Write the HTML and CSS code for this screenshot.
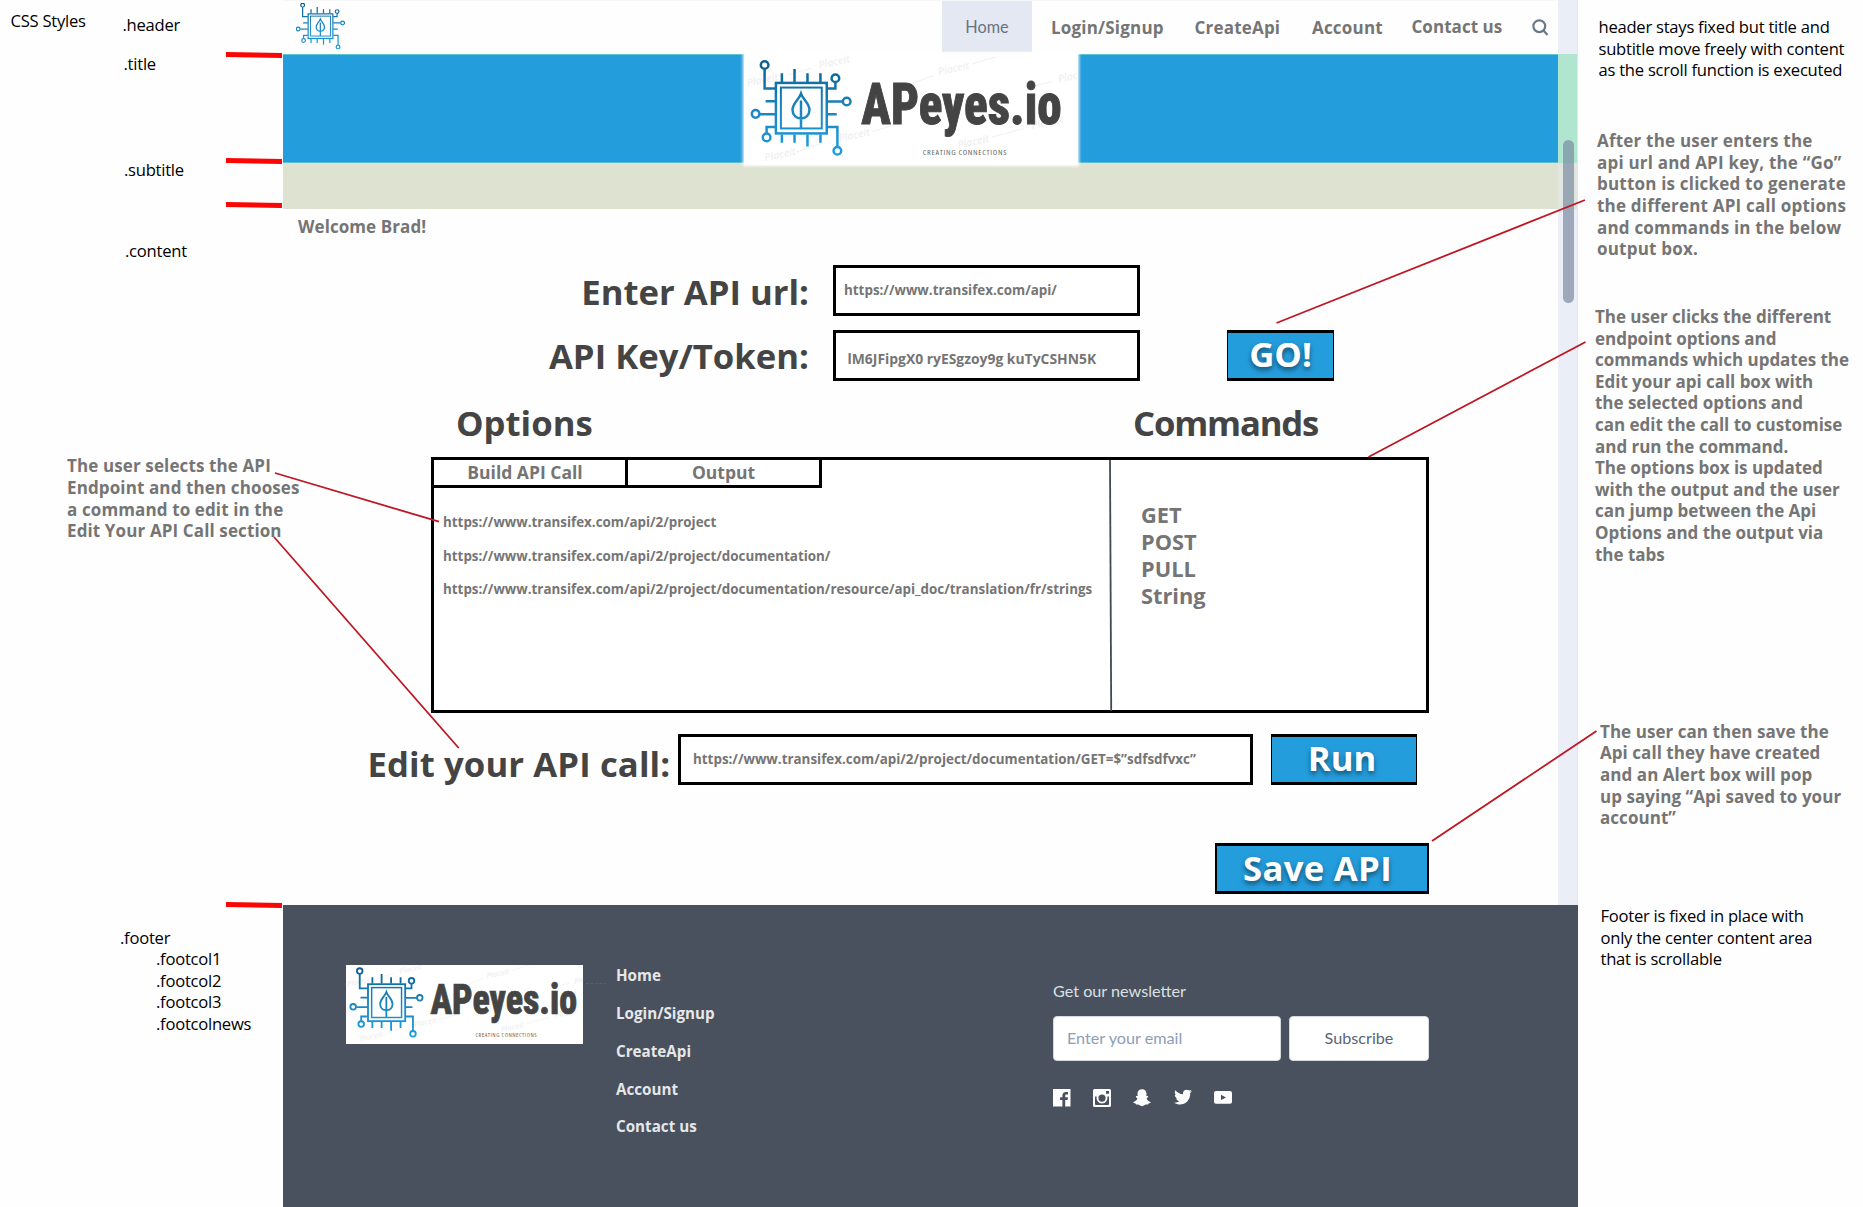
FILE: index.html
```html
<!DOCTYPE html>
<html lang="en">
<head>
<meta charset="utf-8">
<title>APeyes.io wireframe</title>
<link rel="stylesheet" href="styles.css">
</head>
<body>
<svg class="defs" width="0" height="0" aria-hidden="true">
  <defs>
    <linearGradient id="chipfill" gradientUnits="userSpaceOnUse" x1="0" y1="180" x2="0" y2="465">
      <stop offset="0" stop-color="#0b5f8f"/><stop offset=".5" stop-color="#1b84be"/><stop offset="1" stop-color="#1a9fe2"/>
    </linearGradient>
    <symbol id="chip" overflow="visible">
      <g fill="none" stroke="url(#chipfill)" stroke-width="7.5">
        <rect x="167" y="247" width="153" height="152"/>
        <rect x="182" y="261" width="123" height="123" stroke-width="6"/>
        <path d="M185 218V244M223 205V244M262 218V244M301 218V244M185 402V427M223 402V427M262 402V438M301 402V427"/>
        <path d="M133 206V264H165M136 302H165M119 341H165M139 398V380H165M346 246V264H322M322 303H367M322 341H350M322 380H352V438"/>
        <circle cx="133" cy="193" r="11.5"/><circle cx="106" cy="340" r="11.5"/><circle cx="139" cy="411" r="11.5"/>
        <circle cx="346" cy="233" r="11.5"/><circle cx="380" cy="303" r="11.5"/><circle cx="352" cy="451" r="11.5"/>
        <path d="M242.500 279C249 298 268 309 268 328C268 344 257 354 242.500 354C228 354 217 344 217 328C217 309 236 298 242.500 279ZM242.500 300V384"/>
      </g>
    </symbol>
    <symbol id="logo" overflow="visible">
      <g class="watermark">
        <text transform="translate(82 258) rotate(-12)">Placeit</text><text transform="translate(298 204) rotate(-12)">Placeit</text>
        <text transform="translate(657 224) rotate(-12)">Placeit</text><text transform="translate(1018 246) rotate(-12)">Plac</text>
        <text transform="translate(358 424) rotate(-12)">Placeit</text><text transform="translate(716 444) rotate(-12)">Placeit</text>
        <text transform="translate(135 482) rotate(-12)">Placeit</text><text transform="translate(938 386) rotate(-12)">Placeit</text>
        <path d="M202 224L274 202M758 190L830 168M925 261L997 243M456 394L530 372M817 410L915 384M228 455L300 430M540 262L640 225"/>
      </g>
      <use href="#chip"/>
      <text class="wordmark" x="424" y="370" textLength="603" lengthAdjust="spacingAndGlyphs">APeyes.io</text>
      <text class="tagline" x="609" y="464" textLength="254" lengthAdjust="spacingAndGlyphs">CREATING CONNECTIONS</text>
    </symbol>
  </defs>
</svg>

<div class="board">
  <aside class="labels">
    <div class="first"><span class="heading">CSS Styles</span><span class="l-header">.header</span></div>
    <div class="l-title">.title</div>
    <div class="l-subtitle">.subtitle</div>
    <div class="l-content">.content</div>
    <p class="note n-left">The user selects the API<br>Endpoint and then chooses<br>a command to edit in the<br>Edit Your API Call section</p>
    <div class="l-footer">.footer</div>
    <div class="l-cols">.footcol1<br>.footcol2<br>.footcol3<br>.footcolnews</div>
  </aside>

  <div class="app">
    <div class="view">
      <div class="page">
        <header class="header">
          <svg class="mark" viewBox="92 180 301 285"><use href="#chip"/></svg>
          <nav class="nav">
            <a class="active">Home</a><a>Login/Signup</a><a>CreateApi</a><a>Account</a><a class="up">Contact us</a>
            <svg class="search" viewBox="0 0 17 17"><circle cx="7.300" cy="7.200" r="5.900"/><path d="M11.300 11.300L15.500 16"/></svg>
          </nav>
        </header>
        <div class="title"><svg class="banner" viewBox="72 160 1003 334"><use href="#logo"/></svg></div>
        <div class="subtitle"></div>
        <main class="content">
          <div class="welcome">Welcome Brad!</div>
          <div class="form">
            <label class="big drop">Enter API url:</label><div class="field">https://www.transifex.com/api/</div><span></span>
            <label class="big">API Key/Token:</label><div class="field token">lM6JFipgX0 ryESgzoy9g kuTyCSHN5K</div><button class="btn go">GO!</button>
          </div>
          <div class="heads"><h2 class="big">Options</h2><h2 class="big commands-title">Commands</h2></div>
          <section class="panel">
            <div class="options">
              <div class="tabs"><span class="build">Build API Call</span><span>Output</span></div>
              <ul class="urls">
                <li>https://www.transifex.com/api/2/project</li>
                <li>https://www.transifex.com/api/2/project/documentation/</li>
                <li>https://www.transifex.com/api/2/project/documentation/resource/api_doc/translation/fr/strings</li>
              </ul>
            </div>
            <ul class="commands"><li>GET</li><li>POST</li><li>PULL</li><li>String</li></ul>
          </section>
          <div class="edit">
            <label class="big edit-label">Edit your API call:</label>
            <div class="field call">https://www.transifex.com/api/2/project/documentation/GET=$”sdfsdfvxc”</div>
            <button class="btn run">Run</button>
          </div>
          <button class="btn save">Save API</button>
        </main>
      </div>
      <div class="scroll"><div class="thumb"></div></div>
    </div>

    <footer class="footer">
      <svg class="footlogo" viewBox="77 168 974 325"><use href="#logo"/></svg>
      <nav class="footlinks"><a>Home</a><a>Login/Signup</a><a>CreateApi</a><a>Account</a><a>Contact us</a></nav>
      <div class="news">
        <div class="news-title">Get our newsletter</div>
        <div class="news-form"><div class="email">Enter your email</div><div class="subscribe">Subscribe</div></div>
        <div class="social">
          <svg width="18" height="18" viewBox="0 0 18 18"><path fill-rule="evenodd" d="M0 0H17.500V17.500H12.200V11H14.600L15 8.300H12.200V6.700C12.200 5.900 12.500 5.400 13.600 5.400H15V3.100C14.600 3 13.900 2.900 13 2.900C10.900 2.900 9.400 4.100 9.400 6.400V8.300H7.100V11H9.400V17.500H0Z"/></svg>
          <svg width="18" height="18" viewBox="0 0 18 18"><path fill-rule="evenodd" d="M1.500 0H16.500Q18 0 18 1.500V16.500Q18 18 16.500 18H1.500Q0 18 0 16.500V1.500Q0 0 1.500 0ZM2 7.500V15.200Q2 16 2.800 16H15.200Q16 16 16 15.200V7.500H14.300A5.500 5.500 0 1 1 3.700 7.500ZM9 5.500A3.600 3.600 0 1 0 9 12.700A3.600 3.600 0 1 0 9 5.500ZM13 2V4.800H16V2Z"/></svg>
          <svg width="18" height="18" viewBox="0 0 18 18"><path d="M9 .3C11.900.3 13.500 2.400 13.500 4.900L13.400 7C14 7.200 14.800 6.800 15.100 7.400C15.400 8.200 14.200 8.600 13.800 9C13.300 10.200 15.300 12.400 17.600 13C17.900 14 16.600 14.300 15.400 14.600L15 15.600C13.600 15.500 12.700 15.400 11.800 16C10.800 16.700 10 17.200 9 17.200C8 17.200 7.200 16.700 6.200 16C5.300 15.400 4.400 15.500 3 15.600L2.600 14.600C1.400 14.300.100 14 .400 13C2.700 12.400 4.700 10.200 4.200 9C3.800 8.600 2.600 8.200 2.900 7.400C3.200 6.800 4 7.200 4.600 7L4.500 4.900C4.500 2.400 6.100.3 9 .3Z"/></svg>
          <svg width="18" height="18" viewBox="0 0 18 18"><path d="M18 2.100C17.300 2.400 16.600 2.600 15.900 2.700C16.700 2.200 17.200 1.500 17.500.700C16.800 1.100 16 1.400 15.200 1.600C13.700 0 9 .400 8.900 4.400L9 5.300C5.900 5.100 3.200 3.700 1.300 1.300C.3 3 .8 5.200 2.400 6.300C1.800 6.200 1.200 6.100.800 5.800C.8 7.600 2 9.100 3.700 9.500C3.200 9.600 2.600 9.700 2.100 9.500C2.500 11 3.900 12.100 5.500 12.100C4 13.400 2.100 13.900 0 13.700C8 18.500 16.300 13 16.200 4.600V4C16.900 3.500 17.600 2.800 18 2.100Z"/></svg>
          <svg width="18" height="18" viewBox="0 0 18 18"><path fill-rule="evenodd" d="M2 2H16Q18 2 18 4V12.700Q18 14.700 16 14.700H2Q0 14.700 0 12.700V4Q0 2 2 2ZM7 5.800V11L12 8.400Z"/></svg>
        </div>
      </div>
    </footer>
  </div>

  <aside class="notes">
    <p class="plain r1">header stays fixed but title and<br>subtitle move freely with content<br>as the scroll function is executed</p>
    <p class="note r2">After the user enters the<br>api url and API key, the “Go”<br>button is clicked to generate<br>the different API call options<br>and commands in the below<br>output box.</p>
    <p class="note r3">The user clicks the different<br>endpoint options and<br>commands which updates the<br>Edit your api call box with<br>the selected options and<br>can edit the call to customise<br>and run the command.<br>The options box is updated<br>with the output and the user<br>can jump between the Api<br>Options and the output via<br>the tabs</p>
    <p class="note r4">The user can then save the<br>Api call they have created<br>and an Alert box will pop<br>up saying “Api saved to your<br>account”</p>
    <p class="plain r5">Footer is fixed in place with<br>only the center content area<br>that is scrollable</p>
  </aside>

  <svg class="connectors" viewBox="0 0 1863 1207">
    <g stroke="#fb0505" stroke-width="5">
      <path d="M226 54.500L282 55.500M226 160.500L282 161.500M226 204.500L282 205.500M226 904.500L282 905.500"/>
    </g>
    <g stroke="#bd1723" stroke-width="1.800">
      <path d="M1276.500 323L1585 200M1368.500 457L1585.500 342M275 473L439 521.700M274 537L458.700 748M1432 841L1596.500 731"/>
    </g>
    <path d="M1110 460L1111.200 711" stroke="#3f4a58" stroke-width="1.800"/>
    <path d="M586 983.500H606" stroke="#56606c" stroke-width="1" stroke-dasharray="3 1.500"/>
  </svg>
</div>
</body>
</html>
```
FILE: styles.css
```css
* { box-sizing: border-box; }
body { margin: 0; background: #fefefe; font-family: "Open Sans", sans-serif; color: #757575; }
p, h2, ul { margin: 0; padding: 0; }
ul { list-style: none; }
.defs { position: absolute; }

.board { position: relative; display: grid; grid-template-columns: 283px 1295px 285px; width: 1863px; height: 1207px; overflow: hidden; white-space: nowrap; }
.connectors { position: absolute; inset: 0; width: 1863px; height: 1207px; pointer-events: none; }

/* Annotations beside the mock-up */
.labels, .plain { color: #000; font-size: 16.600px; line-height: 21.600px; letter-spacing: -.25px; }
.note { color: #757575; font-size: 17px; font-weight: 700; line-height: 21.600px; letter-spacing: .2px; }
.first { display: flex; height: 35.200px; padding: 9.800px 0 0 10.500px; }
.l-header { margin: 3.800px 0 0 36px; }
.heading { width: 76px; }
.l-title { margin: 17.400px 0 0 123.500px; }
.l-subtitle { margin: 84.400px 0 0 124px; }
.l-content { margin: 59.400px 0 0 125px; }
.n-left { margin: 194.200px 0 0 67px; letter-spacing: .12px; }
.l-footer { margin: 384.900px 0 0 120px; }
.l-cols { margin-left: 156px; }
.notes { padding-top: 16.200px; }
.r1 { margin-left: 20.500px; }
.r2 { margin: 49.200px 0 0 19px; }
.r3 { margin: 46.400px 0 0 17px; letter-spacing: -.03px; }
.r4 { margin: 155.500px 0 0 22px; letter-spacing: .05px; }
.r5 { margin: 76.300px 0 0 22.500px; }

/* Application frame */
.view { display: flex; height: 905px; }
.page { width: 1275px; border-top: 1px solid #f7f7f7; }
.scroll { position: relative; width: 20px; border-right: 1px solid #e3e6ee; background: linear-gradient(#ebeef7 54px, #b0e5cf 54px 163px, #e1e5df 163px 209px, #ebeef7 209px); }
.thumb { position: absolute; left: 5px; top: 140px; width: 11px; height: 163px; border-radius: 6px; background: rgba(120, 135, 157, .68); }

.header { display: flex; height: 53px; }
.mark { width: 48.700px; height: 46.200px; margin: 2px 0 0 13px; }
.nav { display: grid; grid-template-columns: 90px 19px 143.500px 117.500px 99.500px 120px 17px; margin-left: 597.300px; font-size: 17px; font-weight: 700; letter-spacing: .2px; line-height: 54px; }
.nav a:nth-child(2) { grid-column: 3; }
.nav .active { height: 51px; background: #e4e8f2; color: #697282; font: 400 16.300px/51px Lato, sans-serif; text-align: center; letter-spacing: 0; }
.nav .up { line-height: 52px; letter-spacing: .05px; }
.search { width: 17px; height: 17px; margin: 18px 0 0 .5px; fill: none; stroke: #6b7889; stroke-width: 2.200; }

.title { height: 109px; padding-left: 461px; background: #249ddd; box-shadow: inset 0 1px #5cc5cf, inset 0 -1px #5abfd0; }
.banner { display: block; position: relative; width: 334px; height: 111px; background: #fff; box-shadow: 0 0 3px 1px #fff; }
.subtitle { height: 46px; background: #dee2d1; }
.wordmark { font: 800 172px Roboto, sans-serif; font-stretch: 75%; fill: #444; stroke: #444; stroke-width: 3; }
.tagline { font: 400 23px "Open Sans", sans-serif; font-stretch: 75%; letter-spacing: 2px; fill: #666; }
.watermark { font: italic 600 31px "Open Sans", sans-serif; fill: #f0f0f0; stroke: none; }
.watermark path { stroke: #f0f0f0; stroke-width: 3; }

.content { padding-top: 6.600px; }
.welcome { margin-left: 15px; font-size: 17px; font-weight: 700; line-height: 22.600px; height: 21.600px; letter-spacing: .08px; }
.big { color: #444; font-size: 34.700px; font-weight: 700; line-height: 51.500px; }
.form { display: grid; grid-template-columns: 526px 307px 107px; grid-template-rows: 51px 51px; column-gap: 24px; row-gap: 14px; margin-top: 27.800px; }
.form .big { text-align: right; }
.drop { padding-top: 1px; }
.field { display: flex; align-items: center; border: 3px solid #000; background: #fff; padding-left: 8px; font-size: 13.400px; font-weight: 700; }
.token { padding: 6px 0 0 11.500px; font-size: 13.900px; }
.btn { display: flex; align-items: center; justify-content: center; height: 51px; margin: 0; padding: 0 0 4px; border: solid #000; border-width: 3px 1.500px; background: #249ddd; color: #fff; font: 700 34.700px/45px "Open Sans", sans-serif; text-shadow: 0 3px 5px rgba(0, 0, 0, .5); }
.go { margin-left: 63px; width: 107px; }
.heads { display: flex; margin: 21.600px 0 0 173px; height: 39px; }
.heads .big { width: 677px; line-height: 40px; }
.heads .commands-title { width: auto; letter-spacing: -1.200px; }

.panel { display: grid; grid-template-columns: 676px 1fr; width: 998px; height: 256px; margin: 15.400px 0 0 148px; border: 3px solid #000; background: #fff; }
.tabs { display: flex; font-size: 17.500px; font-weight: 700; line-height: 25px; text-align: center; }
.tabs span { width: 194px; height: 28px; border: solid #000; border-width: 0 3px 3px 0; }
.tabs .build { padding-right: 9px; }
.urls { margin: 18.400px 0 0 9px; font-size: 13.380px; font-weight: 700; line-height: 33.400px; }
.commands { padding: 41px 0 0 31px; font-size: 21.800px; font-weight: 700; line-height: 27px; }
.edit { display: flex; height: 51px; margin: 21px 0 0 84.500px; }
.edit-label { width: 310.500px; padding-top: 4px; letter-spacing: .1px; }
.call { width: 575px; height: 51px; padding-left: 12px; }
.run { width: 146px; margin-left: 18px; padding-right: 4px; }
.save { width: 214px; margin: 58px 0 0 932px; padding: 0 9px 2px 0; border-width: 3px 2.500px; letter-spacing: .3px; }

/* Footer */
.footer { display: flex; height: 302px; padding-left: 63px; background: #48515d; }
.footlogo { width: 237px; height: 79px; margin-top: 60px; background: #fff; overflow: hidden; }
.footlinks { display: flex; flex-direction: column; width: 437px; margin: 52.400px 0 0 33px; color: #e6e7e8; font-size: 15.200px; font-weight: 700; line-height: 37.700px; }
.news { padding-top: 73.700px; font-family: Lato, sans-serif; font-size: 16.200px; }
.news-title { color: #dde0e4; line-height: 24px; }
.news-form { display: flex; gap: 8px; margin-top: 13.300px; line-height: 41px; }
.email, .subscribe { height: 45px; border: 1px solid #d5d9e0; border-radius: 4px; background: #fff; }
.email { width: 228px; padding-left: 13px; color: #8e9db4; }
.subscribe { width: 140px; color: #596575; text-align: center; }
.social { display: flex; gap: 22.200px; margin-top: 28px; fill: #fff; }
```
